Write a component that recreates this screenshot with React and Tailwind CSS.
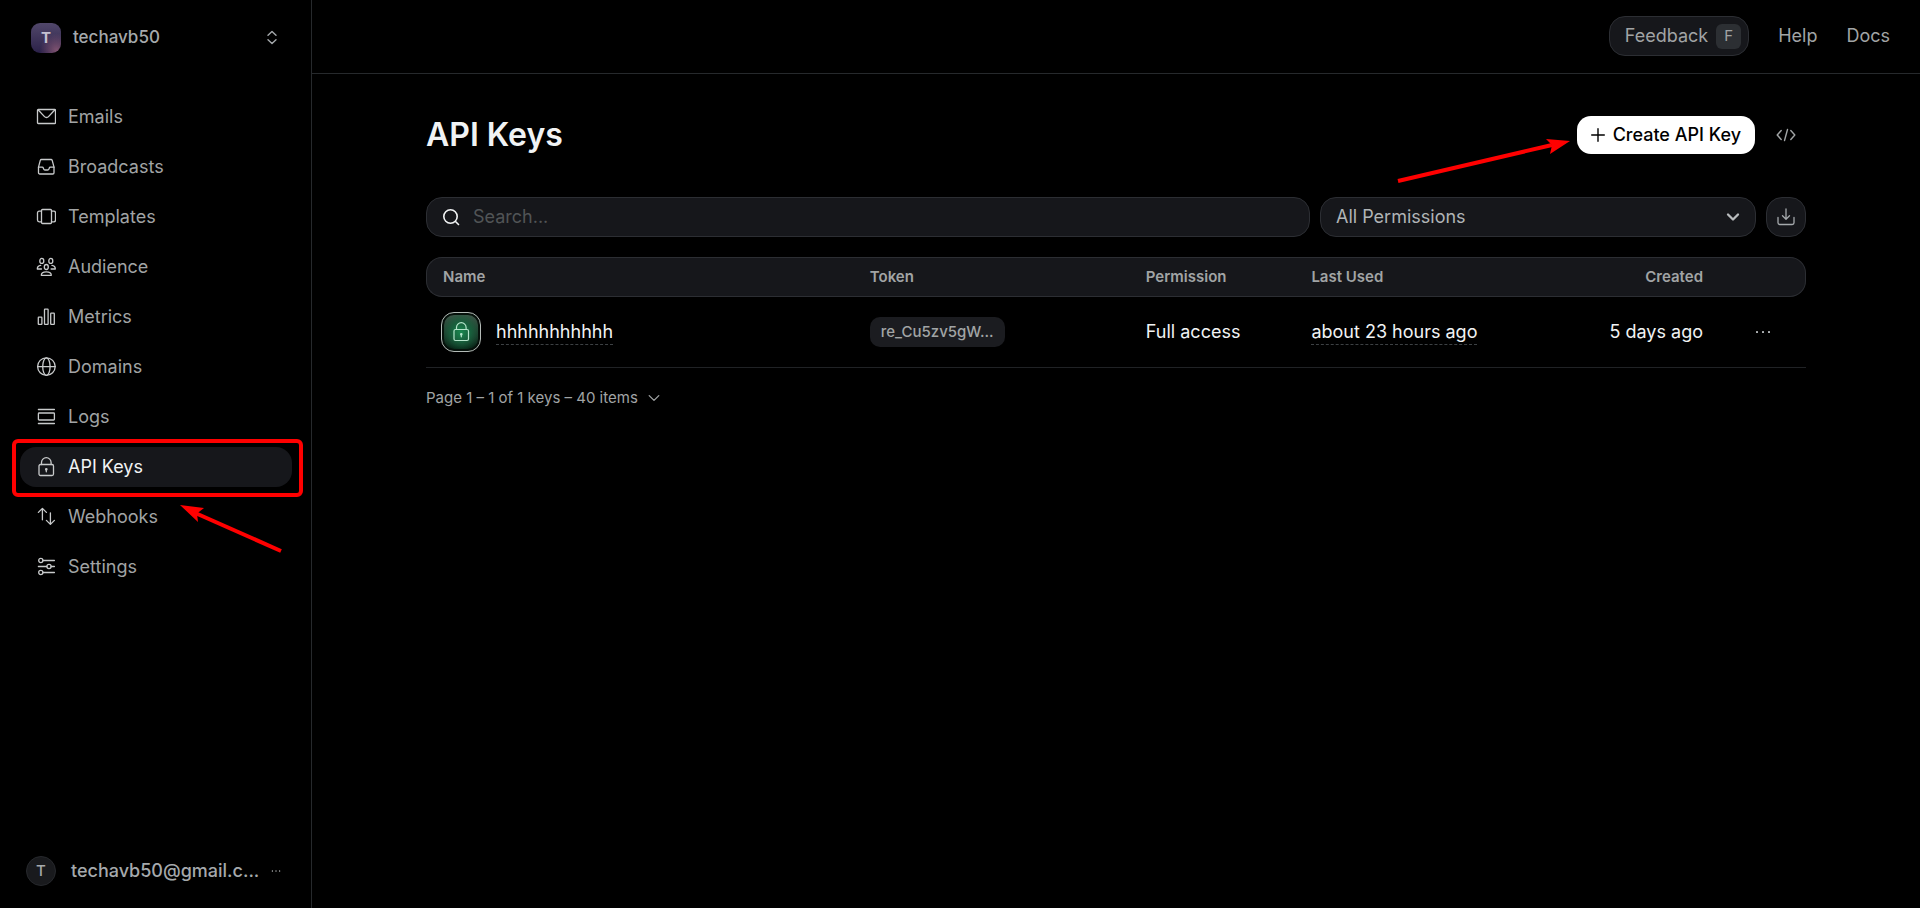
import { useState } from "react";

function Icon({ size = 20, strokeWidth = 1.3, className = "shrink-0", children }) {
  return (
    <svg
      width={size}
      height={size}
      viewBox="0 0 20 20"
      fill="none"
      stroke="currentColor"
      strokeWidth={strokeWidth}
      strokeLinecap="round"
      strokeLinejoin="round"
      className={className}
      aria-hidden="true"
    >
      {children}
    </svg>
  );
}

const LOCK = (
  <>
    <rect x="3" y="7.5" width="14.5" height="11" rx="1.5" />
    <path d="M5.5 7.5V5.5a4.8 4.8 0 0 1 9.6 0v2" />
    <circle cx="10.3" cy="12.3" r="0.7" fill="currentColor" />
    <path d="M10.3 12.5v2.3" />
  </>
);

const NAV = [
  {
    label: "Emails",
    icon: (
      <>
        <rect x="1.5" y="2.5" width="18" height="14" rx="0.8" />
        <path d="M2.3 3l6.2 6.6a2.7 2.7 0 0 0 4 0L18.7 3" />
      </>
    ),
  },
  {
    label: "Broadcasts",
    icon: (
      <>
        <path d="M2.5 10.2L4.3 3.4a1.3 1.3 0 0 1 1.2-.9h9.5a1.3 1.3 0 0 1 1.2.9l1.8 6.8v5.5a1.3 1.3 0 0 1-1.3 1.3H3.8a1.3 1.3 0 0 1-1.3-1.3z" />
        <path d="M2.5 10.2h3.7c.7 0 1 .4 1.2 1l.3.9c.2.6.6.9 1.2.9h2.8c.6 0 1-.3 1.2-.9l.3-.9c.2-.6.5-1 1.2-1H18" />
      </>
    ),
  },
  {
    label: "Templates",
    icon: (
      <>
        <rect x="5.5" y="2.5" width="10" height="14" rx="1" />
        <path d="M5.5 4.2H3.2c-1 0-1.7.7-1.7 1.7v7.2c0 1 .7 1.7 1.7 1.7h2.3M15.5 4.2h2.3c1 0 1.7.7 1.7 1.7v7.2c0 1-.7 1.7-1.7 1.7h-2.3" />
      </>
    ),
  },
  {
    label: "Audience",
    icon: (
      <>
        <ellipse cx="5.8" cy="3.9" rx="2" ry="2.5" />
        <ellipse cx="14.8" cy="3.9" rx="2" ry="2.5" />
        <ellipse cx="10.3" cy="10" rx="2" ry="2.5" />
        <path d="M5.5 12H1.3c0-2.2 1.4-3.4 3.4-3.6M15.1 12h4.2c0-2.2-1.4-3.4-3.4-3.6" />
        <path d="M5.3 18.3c0-2.3 1.8-3.4 5-3.4s5 1.1 5 3.4z" />
      </>
    ),
  },
  {
    label: "Metrics",
    icon: (
      <>
        <rect x="2.3" y="10.2" width="3.6" height="7.2" rx="0.5" />
        <rect x="8.5" y="2.2" width="3.6" height="15.2" rx="0.5" />
        <rect x="14.7" y="6.2" width="3.6" height="11.2" rx="0.5" />
      </>
    ),
  },
  {
    label: "Domains",
    icon: (
      <>
        <circle cx="10.4" cy="9.6" r="8.8" />
        <ellipse cx="10.4" cy="9.6" rx="3.7" ry="8.8" />
        <path d="M1.6 9.6h17.6" />
      </>
    ),
  },
  {
    label: "Logs",
    icon: (
      <>
        <path d="M2.4 2.5h16M2.4 16.5h16" />
        <rect x="2.4" y="6" width="16" height="7" rx="0.8" />
      </>
    ),
  },
  { label: "API Keys", icon: LOCK },
  {
    label: "Webhooks",
    icon: (
      <>
        <path d="M6.4 12.8V1.6M2.4 5.4l4-4 4 4" />
        <path d="M14.4 5.8v11.4M10.4 13.4l4 4 4-4" />
      </>
    ),
  },
  {
    label: "Settings",
    icon: (
      <>
        <circle cx="4.8" cy="3.5" r="2.1" />
        <circle cx="13" cy="9.5" r="2.1" />
        <circle cx="4.8" cy="15.5" r="2.1" />
        <path d="M7 3.5h11.4M2.4 9.5h8.4M15.2 9.5h3.2M7 15.5h11.4" />
      </>
    ),
  },
];

const KEYS = [
  {
    name: "hhhhhhhhhhh",
    token: "re_Cu5zv5gW...",
    permission: "Full access",
    lastUsed: "about 23 hours ago",
    created: "5 days ago",
  },
];

function Dots({ size = 20 }) {
  return (
    <svg width={size} height={size} viewBox="0 0 20 20" fill="currentColor" aria-hidden="true">
      <rect x="3" y="9" width="2" height="2" rx="0.5" />
      <rect x="9" y="9" width="2" height="2" rx="0.5" />
      <rect x="15" y="9" width="2" height="2" rx="0.5" />
    </svg>
  );
}

function Sidebar({ active, onSelect }) {
  return (
    <aside className="flex w-[312px] shrink-0 flex-col border-r border-[#26292c]">
      <button className="mx-5 mt-4 flex h-11 items-center gap-3 pr-[10px] pl-[11px] text-left">
        <span className="flex size-[30px] items-center justify-center rounded-[9px] bg-[radial-gradient(circle_at_85%_90%,#7d5270_0%,transparent_45%),linear-gradient(180deg,#51476a,#2b2149)] text-[15px] font-bold text-[#c4c0d0]">
          T
        </span>
        <span className="flex-1 text-[17px] font-medium text-[#a5a9ac]">techavb50</span>
        <svg
          width="18"
          height="18"
          viewBox="0 0 18 18"
          fill="none"
          stroke="#a5a9ac"
          strokeWidth="1.4"
          strokeLinecap="round"
          strokeLinejoin="round"
          aria-hidden="true"
        >
          <path d="M5 6.2L9 2.5l4 3.7M5 10.8l4 3.7 4-3.7" />
        </svg>
      </button>

      <nav className="mt-[37px] flex flex-col gap-2.5 pr-[19px] pl-5">
        {NAV.map(({ label, icon }) => (
          <div key={label} className="relative">
            <a
              href="#"
              onClick={() => onSelect(label)}
              className={
                "flex h-10 items-center gap-3 rounded-2xl px-4 text-lg " +
                (label === active ? "bg-[#16171b] text-[#f1f3f4]" : "text-[#a1a4a5]")
              }
            >
              <span className="text-[#c8cacb]">
                <Icon>{icon}</Icon>
              </span>
              {label}
            </a>
            {label === "API Keys" && (
              <>
                <div className="pointer-events-none absolute -top-2 -right-[11px] -bottom-2.5 -left-2 rounded-md border-4 border-[#ff0000]" />
                <svg
                  className="pointer-events-none absolute top-14 left-[158px]"
                  width="106"
                  height="52"
                  viewBox="0 0 106 52"
                  aria-hidden="true"
                >
                  <path d="M15 9L103 48" stroke="#ff0000" strokeWidth="4" />
                  <path d="M2 2l24 3-7 5.5 1 8.5z" fill="#ff0000" />
                </svg>
              </>
            )}
          </div>
        ))}
      </nav>

      <div className="mt-auto mb-5 flex h-[34px] items-center pr-[29px] pl-[26px]">
        <span className="flex size-[30px] shrink-0 items-center justify-center rounded-full border border-[#26282c] bg-[#191a1d] text-[15px] font-medium text-[#a5a9ac]">
          T
        </span>
        <span className="ml-[15px] flex-1 whitespace-nowrap text-lg font-medium text-[#a5a9ac]">
          techavb50@gmail.c...
        </span>
        <button className="shrink-0 text-[#f1f3f4]" aria-label="Account menu">
          <Dots size={12} />
        </button>
      </div>
    </aside>
  );
}

function Header() {
  return (
    <header className="flex h-[74px] items-center justify-end gap-[29px] border-b border-[#26292c] px-[30px] pb-px text-lg text-[#a1a4a5]">
      <button className="flex h-10 items-center gap-2 rounded-2xl border border-[#2c2e33] bg-[#16171b] pr-[7px] pl-[15px]">
        Feedback
        <kbd className="flex size-[25px] items-center justify-center rounded-md bg-[#2c2f33] font-[Inter] text-[15px]">
          F
        </kbd>
      </button>
      <a href="#">Help</a>
      <a href="#">Docs</a>
    </header>
  );
}

function Toolbar() {
  return (
    <div className="mt-[42px] flex gap-2.5 text-lg">
      <label className="flex h-10 flex-1 items-center gap-3 rounded-2xl border border-[#2c2e33] bg-[#16171b] px-[14px]">
        <Icon className="shrink-0 text-[#f1f3f4]" strokeWidth={1.6}>
          <circle cx="9.5" cy="9.5" r="6.7" />
          <path d="M14.5 14.5l3 3" />
        </Icon>
        <input
          type="text"
          aria-label="Search"
          placeholder="Search..."
          className="w-full bg-transparent text-[#f1f3f4] outline-none placeholder:text-[#515456]"
        />
      </label>
      <div className="relative w-109">
        <select
          aria-label="Permissions"
          className="h-10 w-full appearance-none rounded-2xl border border-[#2c2e33] bg-[#16171b] px-[15px] text-[#b0b4b6] outline-none"
        >
          <option>All Permissions</option>
          <option>Full access</option>
          <option>Sending access</option>
        </select>
        <Icon
          className="pointer-events-none absolute top-2.5 right-[13px] text-[#b9bcbe]"
          strokeWidth={2.3}
        >
          <path d="M5 7.5l5 5 5-5" />
        </Icon>
      </div>
      <button
        aria-label="Export"
        className="flex size-10 items-center justify-center rounded-2xl border border-[#2c2e33] bg-[#16171b] text-[#a5a9ac]"
      >
        <Icon>
          <path d="M10 2v10M6.5 8.8l3.5 3.5 3.5-3.5M2 10.5v5.2c0 1.1.8 1.8 1.8 1.8h12.4c1 0 1.8-.7 1.8-1.8v-5.2" />
        </Icon>
      </button>
    </div>
  );
}

function KeysTable() {
  const th = "border-y border-[#2c2e33] bg-[#16171b] px-4 font-semibold";
  const td = "border-b border-[#202225] px-4";

  return (
    <table className="mt-5 w-full table-fixed border-separate border-spacing-0 text-left">
      <thead className="text-[15px] text-[#a1a4a5]">
        <tr className="h-10">
          <th className={th + " w-[31%] rounded-l-2xl border-l"}>Name</th>
          <th className={th + " w-[20%]"}>Token</th>
          <th className={th + " w-[12%]"}>Permission</th>
          <th className={th + " w-[18%]"}>Last Used</th>
          <th className={th + " text-right"}>Created</th>
          <th aria-label="Actions" className={th + " w-[87px] rounded-r-2xl border-r"} />
        </tr>
      </thead>
      <tbody className="text-lg text-[#f1f3f4]">
        {KEYS.map((key) => (
          <tr key={key.token} className="h-[71px]">
            <td className="border-b border-[#202225] px-[15px]">
              <div className="flex items-center gap-[15px]">
                <span className="flex size-10 items-center justify-center rounded-[13px] border border-[#b4bbb7] bg-[#06110b] p-[2px]">
                  <span className="flex size-full items-center justify-center rounded-[10px] bg-[radial-gradient(circle_at_50%_50%,#1a8850_0%,#185f3c_40%,transparent_80%),linear-gradient(180deg,#3c5547,#052214)] text-[#b5e5cb]">
                    <Icon strokeWidth={1.2}>{LOCK}</Icon>
                  </span>
                </span>
                <a href="#" className="border-b border-dashed border-[#3d4144] leading-[25px]">
                  {key.name}
                </a>
              </div>
            </td>
            <td className={td}>
              <button className="flex h-[30px] items-center rounded-[10px] bg-[#1b1c20] px-[11px] text-[15px] font-medium text-[#a1a4a5]">
                {key.token}
              </button>
            </td>
            <td className={td}>{key.permission}</td>
            <td className={td}>
              <time className="block w-fit border-b border-dashed border-[#3d4144] leading-[25px]">
                {key.lastUsed}
              </time>
            </td>
            <td className={td + " text-right"}>{key.created}</td>
            <td className="border-b border-[#202225] pl-[34px]">
              <button className="flex text-[#b0b4b6]" aria-label="More actions">
                <Dots size={20} />
              </button>
            </td>
          </tr>
        ))}
      </tbody>
    </table>
  );
}

export default function App() {
  const [active, setActive] = useState("API Keys");

  return (
    <div className="flex min-h-screen bg-black font-[Inter,sans-serif]">
      <Sidebar active={active} onSelect={setActive} />

      <div className="flex min-w-0 flex-1 flex-col">
        <Header />

        <main className="mx-auto w-full max-w-[1380px] pt-[41px]">
          <div className="flex h-10 items-center">
            <h1 className="flex-1 text-[32px] font-semibold text-[#f1f3f4]">API Keys</h1>
            <div className="relative">
              <button className="flex h-[38px] items-center gap-2 rounded-[14px] bg-white px-[14px] text-lg font-medium text-black">
                <Icon size={14} strokeWidth={2}>
                  <path d="M10 1v18M1 10h18" />
                </Icon>
                Create API Key
              </button>
              <svg
                className="pointer-events-none absolute top-5 right-[183px]"
                width="178"
                height="50"
                viewBox="0 0 178 50"
                aria-hidden="true"
              >
                <path d="M4 45L158 9" stroke="#ff0000" strokeWidth="4" />
                <path d="M176 5l-20 13 2-9-6-6z" fill="#ff0000" />
              </svg>
            </div>
            <button
              className="ml-[11px] flex size-10 items-center justify-center text-[#a1a4a5]"
              aria-label="View code"
            >
              <Icon strokeWidth={1.4}>
                <path d="M5.2 5.5L1.2 10l4 4.5M14.8 5.5l4 4.5-4 4.5M11.5 4.5l-3 11" />
              </Icon>
            </button>
          </div>

          <Toolbar />
          <KeysTable />

          <button className="mt-[19px] flex items-center gap-2 text-[15px] text-[#a1a4a5]">
            Page 1 – 1 of 1 keys – 40 items
            <Icon size={16} strokeWidth={1.6}>
              <path d="M4 7l6 6 6-6" />
            </Icon>
          </button>
        </main>
      </div>
    </div>
  );
}
